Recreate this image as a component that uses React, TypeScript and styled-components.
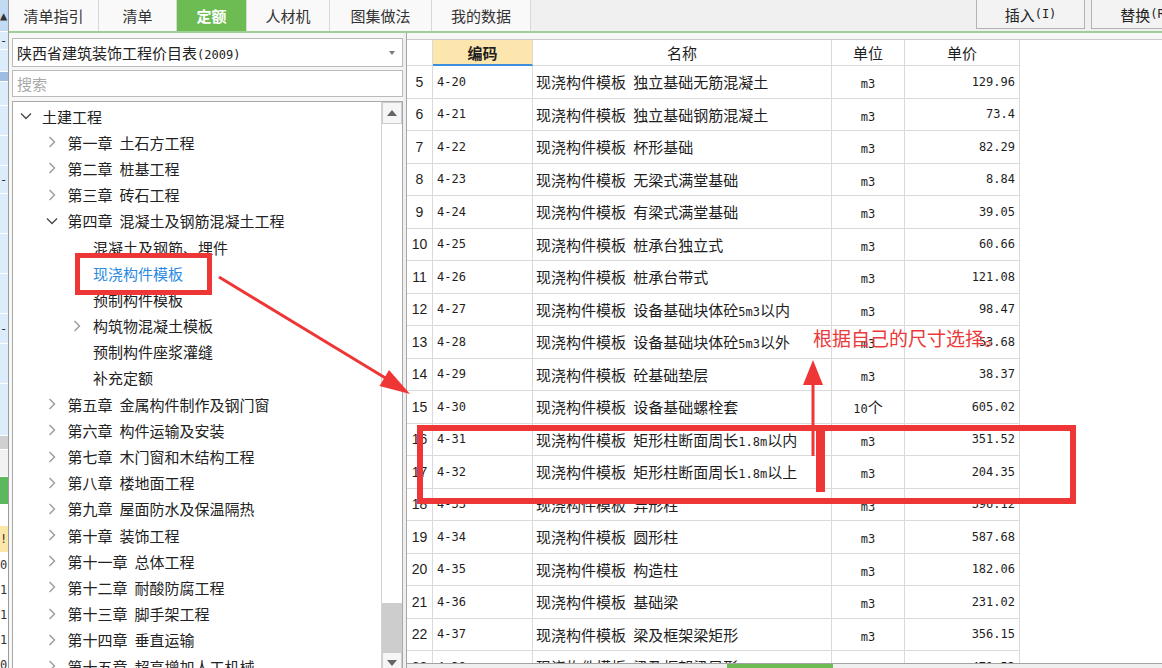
import React from "react";
import styled, { createGlobalStyle } from "styled-components";

const CJK = `"Noto Sans CJK SC", "Noto Sans", sans-serif`;
const MONO = `"DejaVu Sans Mono", "Liberation Mono", "Noto Sans CJK SC", monospace`;
const RED = "#ef3636";

const GlobalStyle = createGlobalStyle`
  html, body { margin: 0; padding: 0; }
  body {
    width: 1162px;
    height: 668px;
    overflow: hidden;
    background: #fff;
    font-family: ${CJK};
  }
  * { box-sizing: border-box; }
`;

const Page = styled.div`
  position: relative;
  width: 1162px;
  height: 668px;
  display: flex;
  overflow: hidden;
  font-family: ${CJK};
  color: #222;
`;

/* ---------- clipped neighbour window at the far left ---------- */
const Strip = styled.div`
  width: 9px;
  flex: none;
  display: flex;
  flex-direction: column;
  border-right: 1px solid #9c9c9c;
  background: #fff;
  overflow: hidden;
`;

const StripCell = styled.div<{ $h: number; $bg: string }>`
  height: ${(p) => p.$h}px;
  flex: none;
  background: ${(p) => p.$bg};
  border-bottom: 1px solid #ffffff;
  font: 12px ${MONO};
  color: #333;
  display: flex;
  align-items: center;
  overflow: hidden;
`;

/* ---------- main ---------- */
const Main = styled.div`
  flex: 1;
  min-width: 0;
  display: flex;
  flex-direction: column;
  background: #f7f7f7;
`;

const TabBar = styled.div`
  height: 33px;
  flex: none;
  display: flex;
  align-items: flex-start;
  background: #f0f0f0;
  border-bottom: 2px solid #9dd193;
  overflow: hidden;
`;

const Tab = styled.div<{ $w: number; $active?: boolean }>`
  width: ${(p) => p.$w}px;
  height: 31px;
  flex: none;
  display: flex;
  align-items: center;
  justify-content: center;
  font-size: 15px;
  border-right: 1px solid #d8d8d8;
  background: ${(p) => (p.$active ? "#6cbb53" : "#f9f9f9")};
  color: ${(p) => (p.$active ? "#fff" : "#333")};
  font-weight: ${(p) => (p.$active ? 700 : 400)};
`;

const BarSpacer = styled.div`
  flex: 1;
`;

const ButtonGroup = styled.div`
  flex: none;
  display: flex;
  gap: 6px;
  margin-right: -39px;
`;

const ToolButton = styled.div<{ $w: number }>`
  width: ${(p) => p.$w}px;
  height: 29px;
  display: flex;
  align-items: center;
  justify-content: center;
  background: #f3f3f3;
  border: 1px solid #b3b3b3;
  border-top: none;
  font-size: 15px;
  color: #222;
  white-space: pre;
`;

const Half = styled.span`
  font-family: ${MONO};
  font-size: 12px;
`;

const mixed = (s: string) =>
  s
    .split(/([\x20-\x7e]+)/)
    .map((part, i) => (i % 2 === 1 ? <Half key={i}>{part}</Half> : part));

const Body = styled.div`
  flex: 1;
  min-height: 0;
  display: flex;
  overflow: hidden;
`;

/* ---------- left panel ---------- */
const LeftPanel = styled.div`
  width: 394px;
  flex: none;
  display: flex;
  flex-direction: column;
  padding: 5px 0 0 3px;
`;

const Select = styled.div`
  height: 29px;
  flex: none;
  display: flex;
  align-items: center;
  justify-content: space-between;
  padding: 0 7px 0 4px;
  background: #fff;
  border: 1px solid #bababa;
  font-size: 15px;
  white-space: pre;
`;

const Caret = styled.span`
  width: 0;
  height: 0;
  border-left: 3px solid transparent;
  border-right: 3px solid transparent;
  border-top: 4px solid #7a7a7a;
`;

const Search = styled.div`
  height: 27px;
  flex: none;
  margin-top: 3px;
  display: flex;
  align-items: center;
  padding: 0 4px;
  background: #fff;
  border: 1px solid #bababa;
  font-size: 15px;
  color: #a9a9a9;
`;

const TreeBox = styled.div`
  height: 574px;
  flex: none;
  margin-top: 4px;
  display: flex;
  background: #fff;
  border: 1px solid #a9a9a9;
`;

const TreeList = styled.div`
  flex: 1;
  padding-top: 1px;
  overflow: hidden;
`;

const TreeRow = styled.div<{ $level: number; $selected?: boolean }>`
  height: 26.2px;
  display: flex;
  align-items: center;
  padding-left: ${(p) => 6 + p.$level * 25.5}px;
  font-size: 15px;
  color: ${(p) => (p.$selected ? "#2a8ae2" : "#222")};
  white-space: nowrap;
`;

const ChevSlot = styled.span`
  width: 14px;
  margin-right: 9px;
  flex: none;
  display: flex;
  justify-content: center;
  align-items: center;
`;

const Chapter = styled.span`
  margin-right: 7px;
`;

const ScrollBar = styled.div`
  width: 21px;
  flex: none;
  display: flex;
  flex-direction: column;
  border-left: 1px solid #d2d2d2;
  background: #fff;
`;

const ScrollBtn = styled.div`
  height: 22px;
  flex: none;
  display: flex;
  align-items: center;
  justify-content: center;
  background: #f6f6f6;
  border: 1px solid #cdcdcd;
`;

const Track = styled.div`
  flex: 1;
`;

const Thumb = styled.div`
  height: 49px;
  flex: none;
  background: #cdcdcd;
`;

const Splitter = styled.div`
  width: 3px;
  flex: none;
  background: #efefef;
`;

/* ---------- table ---------- */
const TablePanel = styled.div`
  flex: 1;
  min-width: 0;
  display: flex;
  flex-direction: column;
  padding-top: 6px;
  border-left: 1px solid #a6a6a6;
`;

const GridWrap = styled.div`
  flex: 1;
  min-height: 0;
  overflow: hidden;
  background: #fff;
  border-top: 1px solid #c9c9c9;
`;

const Grid = styled.div`
  display: grid;
  grid-template-columns: 26px 100px 299px 73px 115px;
  grid-template-rows: 26px;
  grid-auto-rows: 32.5px;
  width: 613px;
`;

const HeadCell = styled.div<{ $hl?: boolean }>`
  display: flex;
  align-items: center;
  justify-content: center;
  font-size: 15px;
  font-weight: ${(p) => (p.$hl ? 700 : 400)};
  color: #1e1e1e;
  background: ${(p) => (p.$hl ? "#fde6ae" : "#fff")};
  border-right: 1px solid #dadada;
  border-bottom: ${(p) => (p.$hl ? "2px solid #3d8edb" : "1px solid #dadada")};
`;

const Cell = styled.div<{ $align?: "left" | "center" | "right"; $num?: boolean }>`
  display: flex;
  align-items: center;
  justify-content: ${(p) =>
    p.$align === "center" ? "center" : p.$align === "right" ? "flex-end" : "flex-start"};
  padding: 0 4px 0 ${(p) => (p.$align === "left" ? 3 : 4)}px;
  font-size: ${(p) => (p.$num ? 14 : 15)}px;
  font-family: ${(p) => (p.$num ? `"Liberation Sans", sans-serif` : CJK)};
  color: #1e1e1e;
  border-right: 1px solid #dadada;
  border-bottom: 1px solid #dadada;
  white-space: pre;
  overflow: hidden;
`;

const BottomBar = styled.div`
  height: 5px;
  flex: none;
  display: flex;
  padding-left: 320px;
  background: #efefef;
  border-top: 1px solid #a3a3a3;
`;

const BottomTab = styled.div`
  width: 106px;
  background: #6cbb53;
`;

/* ---------- annotations (drawn over the screenshot) ---------- */
const Overlay = styled.svg`
  position: absolute;
  left: 0;
  top: 0;
  pointer-events: none;
`;

const MarkBox = styled.div<{ $x: number; $y: number; $w: number; $h: number; $b: number }>`
  position: absolute;
  left: ${(p) => p.$x}px;
  top: ${(p) => p.$y}px;
  width: ${(p) => p.$w}px;
  height: ${(p) => p.$h}px;
  border: ${(p) => p.$b}px solid ${RED};
  pointer-events: none;
`;

const Note = styled.div`
  position: absolute;
  left: 813px;
  top: 328px;
  font-size: 19px;
  line-height: 19px;
  color: #eb3a3a;
  white-space: nowrap;
`;

/* ---------- data ---------- */
const tabs = [
  { label: "清单指引", w: 90 },
  { label: "清单", w: 78 },
  { label: "定额", w: 70, active: true },
  { label: "人材机", w: 83 },
  { label: "图集做法", w: 102 },
  { label: "我的数据", w: 99 },
];

type Node = {
  level: number;
  ch?: string;
  text: string;
  chev?: "down" | "right";
  selected?: boolean;
};

const tree: Node[] = [
  { level: 0, text: "土建工程", chev: "down" },
  { level: 1, ch: "第一章", text: "土石方工程", chev: "right" },
  { level: 1, ch: "第二章", text: "桩基工程", chev: "right" },
  { level: 1, ch: "第三章", text: "砖石工程", chev: "right" },
  { level: 1, ch: "第四章", text: "混凝土及钢筋混凝土工程", chev: "down" },
  { level: 2, text: "混凝土及钢筋、埋件" },
  { level: 2, text: "现浇构件模板", selected: true },
  { level: 2, text: "预制构件模板" },
  { level: 2, text: "构筑物混凝土模板", chev: "right" },
  { level: 2, text: "预制构件座浆灌缝" },
  { level: 2, text: "补充定额" },
  { level: 1, ch: "第五章", text: "金属构件制作及钢门窗", chev: "right" },
  { level: 1, ch: "第六章", text: "构件运输及安装", chev: "right" },
  { level: 1, ch: "第七章", text: "木门窗和木结构工程", chev: "right" },
  { level: 1, ch: "第八章", text: "楼地面工程", chev: "right" },
  { level: 1, ch: "第九章", text: "屋面防水及保温隔热", chev: "right" },
  { level: 1, ch: "第十章", text: "装饰工程", chev: "right" },
  { level: 1, ch: "第十一章", text: "总体工程", chev: "right" },
  { level: 1, ch: "第十二章", text: "耐酸防腐工程", chev: "right" },
  { level: 1, ch: "第十三章", text: "脚手架工程", chev: "right" },
  { level: 1, ch: "第十四章", text: "垂直运输", chev: "right" },
  { level: 1, ch: "第十五章", text: "超高增加人工机械", chev: "right" },
];

const rows: [number, string, string, string, string][] = [
  [5, "4-20", "独立基础无筋混凝土", "m3", "129.96"],
  [6, "4-21", "独立基础钢筋混凝土", "m3", "73.4"],
  [7, "4-22", "杯形基础", "m3", "82.29"],
  [8, "4-23", "无梁式满堂基础", "m3", "8.84"],
  [9, "4-24", "有梁式满堂基础", "m3", "39.05"],
  [10, "4-25", "桩承台独立式", "m3", "60.66"],
  [11, "4-26", "桩承台带式", "m3", "121.08"],
  [12, "4-27", "设备基础块体砼5m3以内", "m3", "98.47"],
  [13, "4-28", "设备基础块体砼5m3以外", "m3", "53.68"],
  [14, "4-29", "砼基础垫层", "m3", "38.37"],
  [15, "4-30", "设备基础螺栓套", "10个", "605.02"],
  [16, "4-31", "矩形柱断面周长1.8m以内", "m3", "351.52"],
  [17, "4-32", "矩形柱断面周长1.8m以上", "m3", "204.35"],
  [18, "4-33", "异形柱", "m3", "396.12"],
  [19, "4-34", "圆形柱", "m3", "587.68"],
  [20, "4-35", "构造柱", "m3", "182.06"],
  [21, "4-36", "基础梁", "m3", "231.02"],
  [22, "4-37", "梁及框架梁矩形", "m3", "356.15"],
  [23, "4-38", "梁及框架梁异形", "m3", "471.53"],
];

const stripCells: [number, string, string][] = [
  [32, "#c3dbf2", "▲"],
  [18, "#dcecfa", "-"],
  [22, "#dcecfa", ""],
  [10, "#9dbde3", ""],
  [24, "#dcecfa", ""],
  [30, "#dcecfa", ""],
  [30, "#dcecfa", ""],
  [28, "#dcecfa", "-"],
  [40, "#dcecfa", ""],
  [40, "#dcecfa", ""],
  [40, "#dcecfa", ""],
  [30, "#dcecfa", "-"],
  [40, "#dcecfa", ""],
  [52, "#dcecfa", ""],
  [14, "#d0d0d0", ""],
  [27, "#f2f2f2", ""],
  [28, "#5cb85c", ""],
  [21, "#ffffff", ""],
  [27, "#fbe7a9", "!"],
  [25, "#ffffff", "0"],
  [25, "#ffffff", "1"],
  [25, "#ffffff", "1"],
  [25, "#ffffff", "1"],
  [25, "#ffffff", "0"],
];

const ChevronRight = () => (
  <svg width="8" height="12" viewBox="0 0 8 12">
    <path d="M1.5 1 L6.5 6 L1.5 11" fill="none" stroke="#9a9a9a" strokeWidth="1.4" />
  </svg>
);

const ChevronDown = () => (
  <svg width="12" height="8" viewBox="0 0 12 8">
    <path d="M1 1.5 L6 6.5 L11 1.5" fill="none" stroke="#4a4a4a" strokeWidth="1.4" />
  </svg>
);

const TriUp = () => (
  <svg width="10" height="6" viewBox="0 0 10 6">
    <polygon points="0,6 5,0 10,6" fill="#666" />
  </svg>
);

const TriDown = () => (
  <svg width="10" height="6" viewBox="0 0 10 6">
    <polygon points="0,0 5,6 10,0" fill="#666" />
  </svg>
);

export default function App() {
  return (
    <>
      <GlobalStyle />
      <Page>
        <Strip>
          {stripCells.map(([h, bg, t], i) => (
            <StripCell key={i} $h={h} $bg={bg}>
              {t}
            </StripCell>
          ))}
        </Strip>

        <Main>
          <TabBar>
            {tabs.map((t) => (
              <Tab key={t.label} $w={t.w} $active={t.active}>
                {t.label}
              </Tab>
            ))}
            <BarSpacer />
            <ButtonGroup>
              <ToolButton $w={109}>{mixed("插入(I)")}</ToolButton>
              <ToolButton $w={110}>{mixed("替换(R)")}</ToolButton>
            </ButtonGroup>
          </TabBar>

          <Body>
            <LeftPanel>
              <Select>
                <span>{mixed("陕西省建筑装饰工程价目表(2009)")}</span>
                <Caret />
              </Select>
              <Search>搜索</Search>
              <TreeBox>
                <TreeList>
                  {tree.map((n, i) => (
                    <TreeRow key={i} $level={n.level} $selected={n.selected}>
                      <ChevSlot>
                        {n.chev === "down" ? <ChevronDown /> : n.chev === "right" ? <ChevronRight /> : null}
                      </ChevSlot>
                      {n.ch && <Chapter>{n.ch}</Chapter>}
                      <span>{n.text}</span>
                    </TreeRow>
                  ))}
                </TreeList>
                <ScrollBar>
                  <ScrollBtn>
                    <TriUp />
                  </ScrollBtn>
                  <Track />
                  <Thumb />
                  <ScrollBtn>
                    <TriDown />
                  </ScrollBtn>
                </ScrollBar>
              </TreeBox>
            </LeftPanel>

            <Splitter />

            <TablePanel>
              <GridWrap>
                <Grid>
                  <HeadCell />
                  <HeadCell $hl>编码</HeadCell>
                  <HeadCell>名称</HeadCell>
                  <HeadCell>单位</HeadCell>
                  <HeadCell>单价</HeadCell>
                  {rows.map(([no, code, name, unit, price]) => (
                    <React.Fragment key={no}>
                      <Cell $align="center" $num>
                        {no}
                      </Cell>
                      <Cell>
                        <Half>{code}</Half>
                      </Cell>
                      <Cell $align="left">
                        <span>{mixed(`现浇构件模板 ${name}`)}</span>
                      </Cell>
                      <Cell $align="center">
                        <span>{mixed(unit)}</span>
                      </Cell>
                      <Cell $align="right">
                        <Half>{price}</Half>
                      </Cell>
                    </React.Fragment>
                  ))}
                </Grid>
              </GridWrap>
              <BottomBar>
                <BottomTab />
              </BottomBar>
            </TablePanel>
          </Body>
        </Main>

        <MarkBox $x={75} $y={253} $w={137} $h={42} $b={5} />
        <MarkBox $x={417} $y={425} $w={659} $h={79} $b={6} />
        <Overlay width={1162} height={668} viewBox="0 0 1162 668">
          <line x1={219} y1={277} x2={392} y2={382} stroke={RED} strokeWidth={3} />
          <polygon points="410,394 379.5,386 389,370" fill={RED} />
          <line x1={813} y1={456} x2={813} y2={380} stroke={RED} strokeWidth={3} />
          <rect x={816} y={428} width={9} height={64} fill={RED} />
          <polygon points="813,360 803,385 823,385" fill={RED} />
        </Overlay>
        <Note>根据自己的尺寸选择。</Note>
      </Page>
    </>
  );
}
